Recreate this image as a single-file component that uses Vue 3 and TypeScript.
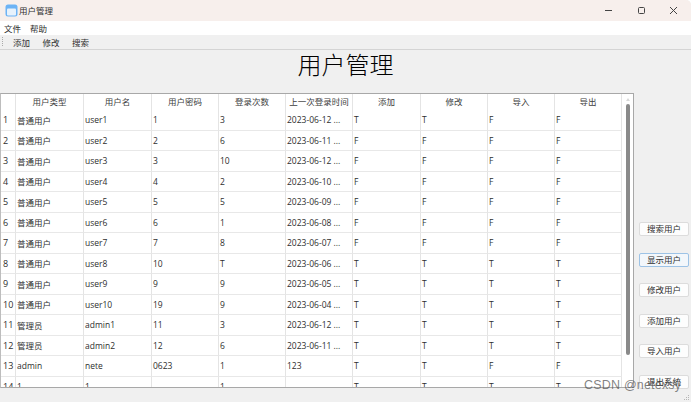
<script setup lang="ts">
const headers: string[] = ['用户类型', '用户名', '用户密码', '登录次数', '上一次登录时间', '添加', '修改', '导入', '导出']
const rows: string[][] = [
  ['普通用户', 'user1', '1', '3', '2023-06-12 ...', 'T', 'T', 'F', 'F'],
  ['普通用户', 'user2', '2', '6', '2023-06-11 ...', 'F', 'F', 'F', 'F'],
  ['普通用户', 'user3', '3', '10', '2023-06-12 ...', 'F', 'F', 'F', 'F'],
  ['普通用户', 'user4', '4', '2', '2023-06-10 ...', 'F', 'F', 'F', 'F'],
  ['普通用户', 'user5', '5', '5', '2023-06-09 ...', 'F', 'F', 'F', 'F'],
  ['普通用户', 'user6', '6', '1', '2023-06-08 ...', 'F', 'F', 'F', 'F'],
  ['普通用户', 'user7', '7', '8', '2023-06-07 ...', 'F', 'F', 'F', 'F'],
  ['普通用户', 'user8', '10', 'T', '2023-06-06 ...', 'T', 'T', 'T', 'T'],
  ['普通用户', 'user9', '9', '9', '2023-06-05 ...', 'T', 'T', 'T', 'T'],
  ['普通用户', 'user10', '19', '9', '2023-06-04 ...', 'T', 'T', 'T', 'T'],
  ['管理员', 'admin1', '11', '3', '2023-06-12 ...', 'T', 'T', 'T', 'T'],
  ['管理员', 'admin2', '12', '6', '2023-06-11 ...', 'T', 'T', 'T', 'T'],
  ['admin', 'nete', '0623', '1', '123', 'T', 'T', 'F', 'F'],
  ['1', '1', '', '1', '', 'T', 'T', 'T', 'T'],
]
const sideButtons: string[] = ['搜索用户', '显示用户', '修改用户', '添加用户', '导入用户', '退出系统']
</script>

<template>
  <div class="window">
    <header class="titlebar">
      <svg class="app-icon" width="13" height="13" viewBox="0 0 13 13">
        <rect x="0.5" y="0.5" width="12" height="12" rx="2.5" fill="#6db3f5" />
        <rect x="2" y="4.5" width="9" height="7" rx="1" fill="#e8f2fc" />
      </svg>
      <span class="app-name">用户管理</span>
      <div class="controls">
        <svg width="9" height="9" viewBox="0 0 9 9"><path d="M1 4.5H8" stroke="#444" fill="none" /></svg>
        <svg width="9" height="9" viewBox="0 0 9 9"><rect x="1.5" y="1.5" width="6" height="6" rx="1" stroke="#444" fill="none" /></svg>
        <svg width="9" height="9" viewBox="0 0 9 9"><path d="M1 1L8 8M8 1L1 8" stroke="#444" fill="none" /></svg>
      </div>
    </header>
    <nav class="menubar"><span>文件</span><span>帮助</span></nav>
    <div class="toolbar">
      <i class="grip"></i>
      <span>添加</span><span>修改</span><span>搜索</span>
    </div>
    <h1 class="heading">用户管理</h1>
    <div class="content">
      <div class="table-box">
        <div class="table">
          <div class="row head">
            <div class="rowno"></div>
            <div v-for="h in headers" :key="h" class="cell">{{ h }}</div>
          </div>
          <div v-for="(r, i) in rows" :key="i" class="row">
            <div class="rowno">{{ i + 1 }}</div>
            <div v-for="(c, j) in r" :key="j" class="cell">{{ c }}</div>
          </div>
        </div>
        <div class="scrollbar"><i class="arrow"></i><i class="thumb"></i></div>
      </div>
      <aside class="side">
        <button v-for="(b, i) in sideButtons" :key="b" class="btn" :class="{ active: i === 1 }">{{ b }}</button>
      </aside>
    </div>
    <div class="watermark">CSDN @netexsy</div>
    <svg class="size-grip" width="7" height="7" viewBox="0 0 7 7">
      <path d="M5 1h1v1H5zM3 3h1v1H3zM5 3h1v1H5zM1 5h1v1H1zM3 5h1v1H3zM5 5h1v1H5z" fill="#b5b5b5" />
    </svg>
  </div>
</template>

<style>
html, body { margin: 0; background: #fff; }
</style>

<style scoped>
.window {
  position: relative;
  width: 691px;
  height: 402px;
  overflow: hidden;
  background: #f0f0f0;
  border-top-right-radius: 5px;
  font-family: "Open Sans", "Noto Sans CJK SC", sans-serif;
  font-size: 8.5px;
  color: #2e2e2e;
  display: flex;
  flex-direction: column;
}
.titlebar {
  height: 21px;
  flex: none;
  background: #f7efec;
  display: flex;
  align-items: center;
  padding-left: 5px;
  padding-bottom: 1px;
  box-sizing: border-box;
}
.app-name { margin-left: 1px; font-size: 8.5px; color: #2e2e2e; }
.controls {
  margin-left: auto;
  display: flex;
  gap: 23.5px;
  padding-right: 13px;
  align-items: center;
}
.controls svg { display: block; }
.menubar {
  height: 14px;
  flex: none;
  background: #fff;
  display: flex;
  gap: 9px;
  align-items: center;
  padding-left: 4px;
}
.toolbar {
  height: 15px;
  flex: none;
  box-sizing: border-box;
  background: #f0f0f0;
  border-bottom: 1px solid #d4d4d4;
  display: flex;
  align-items: center;
  padding-left: 2px;
  padding-bottom: 1px;
}
.toolbar span { margin-right: 12.5px; }
.grip {
  width: 1px;
  height: 9px;
  margin-right: 9px;
  border-left: 1px dotted #aaa;
}
.heading {
  flex: none;
  height: 43px;
  margin: 0;
  font-family: "Noto Sans CJK SC", sans-serif;
  font-size: 24px;
  font-weight: 300;
  line-height: 28px;
  text-align: center;
  color: #000;
}
.content {
  flex: none;
  display: flex;
  height: 295px;
}
.table-box {
  width: 634px;
  height: 295px;
  box-sizing: border-box;
  flex: none;
  border: 1px solid #a8a8a8;
  border-left-color: #bdbdbd;
  background: #fff;
  display: flex;
  overflow: hidden;
}
.table {
  flex: 1;
  min-width: 0;
}
.row {
  display: grid;
  grid-template-columns: 15px 68px 68px 67px 67px 67px 68px 67px 67px 67px;
  grid-auto-rows: 20.5px;
}
.row.head {
  grid-auto-rows: 16px;
  color: #404040;
}
.rowno {
  display: flex;
  align-items: center;
  padding-left: 2px;
  font-size: 9px;
  border-right: 1px solid #e4e4e4;
  border-bottom: 1px solid #e8e8e8;
  box-sizing: border-box;
}
.head .rowno { border-bottom: none; }
.cell {
  display: flex;
  align-items: center;
  padding-left: 1px;
  border-right: 1px solid #e4e4e4;
  border-bottom: 1px solid #e8e8e8;
  box-sizing: border-box;
  white-space: nowrap;
  overflow: hidden;
}
.head .cell {
  justify-content: center;
  padding-left: 0;
  padding-bottom: 2px;
  border-bottom: none;
}
.scrollbar {
  width: 11px;
  flex: none;
  background: #fff;
  position: relative;
  display: flex;
  flex-direction: column;
  align-items: center;
}
.arrow {
  margin-top: 4px;
  width: 0;
  height: 0;
  border-left: 2px solid transparent;
  border-right: 2px solid transparent;
  border-bottom: 3px solid #d8d8d8;
}
.thumb {
  margin-top: 3px;
  width: 4px;
  height: 251px;
  border-radius: 2px;
  background: #8a8a8a;
}
.side {
  flex: none;
  margin-left: 5px;
  width: 50px;
  padding-top: 129px;
  display: flex;
  flex-direction: column;
  gap: 16.6px;
}
.btn {
  height: 14px;
  width: 50px;
  padding: 0 0 1px;
  box-sizing: border-box;
  border: 1px solid #dcdcdc;
  border-radius: 2px;
  background: #fdfdfd;
  font: inherit;
  color: #2e2e2e;
  line-height: 11px;
}
.btn.active {
  border-color: #9dc3e6;
  background: #f3f7fb;
}
.watermark {
  position: absolute;
  left: 584px;
  top: 378px;
  font-family: "Liberation Sans", sans-serif;
  font-size: 12.5px;
  letter-spacing: 0.2px;
  color: rgba(80, 80, 80, 0.72);
  white-space: nowrap;
}
.size-grip {
  position: absolute;
  right: 1px;
  bottom: 1px;
}
</style>
